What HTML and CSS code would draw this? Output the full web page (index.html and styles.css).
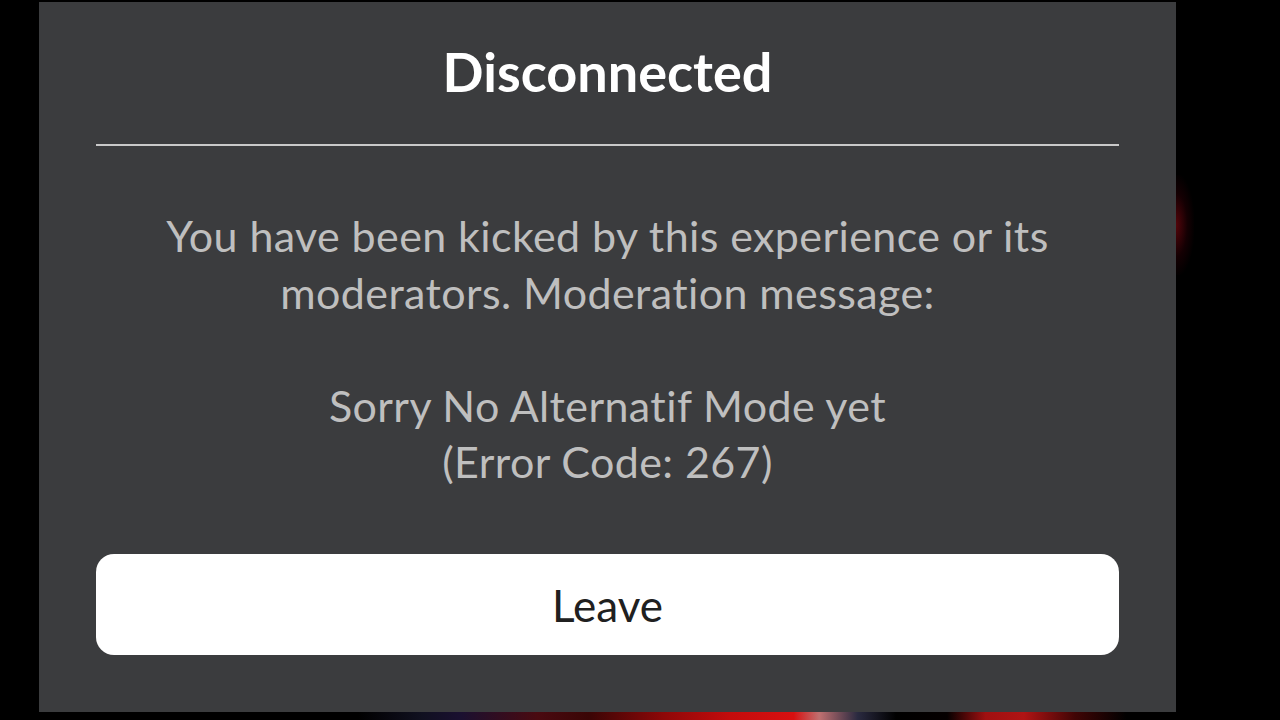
FILE: index.html
```html
<!DOCTYPE html>
<html lang="en">
<head>
<meta charset="utf-8">
<title>Disconnected</title>
<link rel="stylesheet" href="styles.css">
</head>
<body>
<div class="stage">
  <div class="glow-right"></div>
  <div class="glow-bottom"></div>
  <div class="panel">
    <h1 class="title">Disconnected</h1>
    <div class="divider"></div>
    <p class="message">You have been kicked by this experience or its<br>moderators. Moderation message:<br><br>Sorry No Alternatif Mode yet<br>(Error Code: 267)</p>
    <button class="leave">Leave</button>
  </div>
</div>
</body>
</html>
```
FILE: styles.css
```css
html, body {
  margin: 0;
  padding: 0;
  background: #000;
  width: 1280px;
  height: 720px;
  overflow: hidden;
}
.stage {
  position: relative;
  width: 1280px;
  height: 720px;
  padding-top: 2px;
  box-sizing: border-box;
  font-family: Lato, "Open Sans", sans-serif;
  font-variant-ligatures: none;
}
.glow-right {
  position: absolute;
  left: 1170px;
  top: 175px;
  width: 24px;
  height: 100px;
  background: radial-gradient(ellipse at 25% 50%, rgba(140, 8, 18, 0.6) 0%, rgba(80, 0, 10, 0.25) 45%, rgba(0, 0, 0, 0) 75%);
}
.glow-bottom {
  position: absolute;
  left: 0;
  top: 712px;
  width: 1280px;
  height: 8px;
  background: linear-gradient(90deg, #000 0%, #000 28%, #101020 33%, #1a1030 36%, #4a0a10 42%, #3a0505 46%, #900808 52%, #c30c0c 57%, #d81010 62%, #c07070 64%, #2a2a40 67%, #000 70%, #050000 74%, #a01010 77%, #b01414 80%, #400505 84%, #000 88%, #000 100%);
}
.panel {
  position: relative;
  margin-left: 39px;
  width: 1137px;
  height: 710px;
  box-sizing: border-box;
  padding: 35px 57px 57px;
  background: #3b3c3e;
  display: flex;
  flex-direction: column;
}
.title {
  margin: 0;
  font-size: 54px;
  line-height: 70px;
  font-weight: 700;
  color: #ffffff;
  text-align: center;
}
.divider {
  margin-top: 37px;
  height: 2px;
  background: #c9c9c9;
}
.message {
  margin: 62px 0 0;
  font-size: 43px;
  line-height: 56.5px;
  letter-spacing: 0.4px;
  color: #bfbfbf;
  text-align: center;
}
.leave {
  margin-top: auto;
  height: 101px;
  border: 0;
  border-radius: 18px;
  background: #ffffff;
  color: #202020;
  font-family: inherit;
  font-size: 44px;
  padding: 0;
}
```
